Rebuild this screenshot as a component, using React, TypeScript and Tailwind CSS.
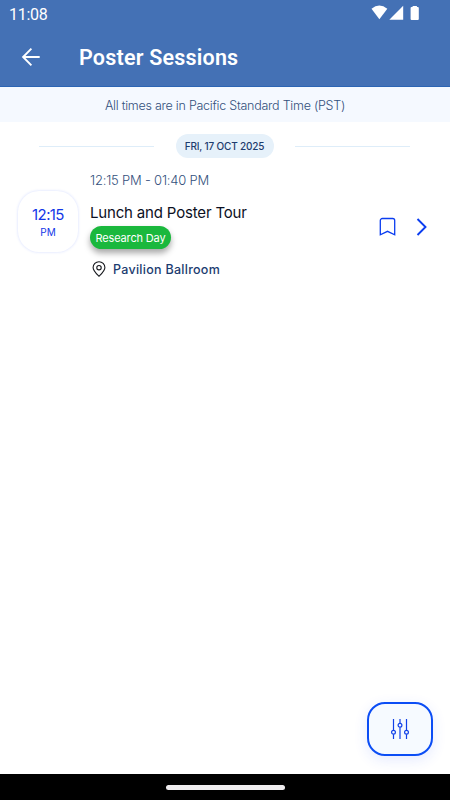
import type { ReactNode } from "react";

type Session = {
  time: string;
  period: string;
  range: string;
  title: string;
  tag: string;
  location: string;
};

const sessions: Session[] = [
  {
    time: "12:15",
    period: "PM",
    range: "12:15 PM - 01:40 PM",
    title: "Lunch and Poster Tour",
    tag: "Research Day",
    location: "Pavilion Ballroom",
  },
];

function StatusBar() {
  return (
    <div className="flex h-7 items-start justify-between pl-[9px] pr-[30px] font-['Roboto',sans-serif] text-white">
      <span className="pt-[5px] text-[16px] leading-[19px] tracking-[-0.25px]">
        11:08
      </span>
      <svg className="mt-[5px]" width="50" height="16" viewBox="0 0 50 16" fill="currentColor">
        <path d="M1.500 3.800Q9.400-2.600 17.300 3.800L9.400 14.200z" />
        <path d="M33.2.8v13.900H19.300z" />
        <path d="M42.6 1h4.300v1h.9a1 1 0 0 1 1 1v11a1 1 0 0 1-1 1h-6.200a1 1 0 0 1-1-1V3a1 1 0 0 1 1-1h1z" />
      </svg>
    </div>
  );
}

function Header({ title }: { title: string }) {
  return (
    <header className="h-[87px] bg-[#4471b5] shadow-[inset_0_-1px_0_#2c65b4]">
      <StatusBar />
      <div className="flex items-center pl-[21px] pt-[17px] text-white">
        <button aria-label="Back" className="-mt-[2px]">
          <svg width="20" height="20" viewBox="0 0 20 20" fill="none" stroke="currentColor" strokeWidth="1.900">
            <path d="M18.700 10H2.200M10.400 1.700L2.100 10l8.300 8.300" />
          </svg>
        </button>
        <h1 className="pl-[38px] font-['Roboto',sans-serif] text-[21.500px] leading-[25px] font-semibold tracking-[0.2px]">
          {title}
        </h1>
      </div>
    </header>
  );
}

function DayDivider({ children }: { children: ReactNode }) {
  return (
    <div className="flex h-6 items-center justify-between pl-[39px] pr-[40px]">
      <span className="h-px w-[115px] bg-[#deedf9]" />
      <span className="flex h-6 w-[98px] items-center justify-center rounded-full bg-[#e6f1fa] text-[10px] font-medium tracking-[-0.17px] whitespace-nowrap text-[#1d3c6e]">
        {children}
      </span>
      <span className="h-px w-[115px] bg-[#deedf9]" />
    </div>
  );
}

function SessionRow({ session }: { session: Session }) {
  return (
    <div className="flex items-start pl-[18px] pr-[21px] pt-[14px]">
      <div className="mt-[19px] flex h-[61px] w-[60px] flex-col items-center rounded-[21px] bg-white pt-[14px] text-[#1337e8] shadow-[0_0_3px_rgba(40,80,255,0.2)]">
        <span className="text-[15px] leading-[20px] tracking-[-0.6px]">{session.time}</span>
        <span className="mt-[1px] text-[10px] leading-[12px]">{session.period}</span>
      </div>

      <div className="flex flex-1 flex-col items-start pl-[12px]">
        <p className="text-[13px] leading-[17px] font-light tracking-[-0.2px] text-[#33507c]">
          {session.range}
        </p>
        <h2 className="mt-[14px] text-[15px] leading-[20px] tracking-[-0.17px] text-[#0b1023]">
          {session.title}
        </h2>
        <span className="mt-[3px] flex h-[23px] w-[81px] items-center justify-center rounded-full bg-[#1ab83d] pt-px text-[11px] tracking-[-0.15px] whitespace-nowrap text-white shadow-[0_4px_6px_rgba(0,0,0,0.35)]">
          {session.tag}
        </span>
        <div className="mt-[12px] flex items-center pl-[2px]">
          <svg width="14" height="17" viewBox="0 0 14 17" fill="none" stroke="#15171c" strokeWidth="1.100">
            <path d="M7 15.300C4.600 13 1.100 10 1.100 6.600a5.900 5.900 0 0 1 11.800 0C12.900 10 9.400 13 7 15.300z" />
            <circle cx="7" cy="6.700" r="2.200" />
          </svg>
          <span className="pl-[7px] text-[12.500px] leading-[17px] font-medium tracking-[0.28px] text-[#1c3c70]">
            {session.location}
          </span>
        </div>
      </div>

      <div className="mt-[45px] flex items-center gap-[19px] text-[#0b3df0]">
        <svg width="18" height="20" viewBox="0 0 18 20" fill="none" stroke="currentColor" strokeWidth="1.300">
          <path d="M3.300 1.500h10.400a2 2 0 0 1 2 2v14.300L8.500 14.300 1.300 17.800V3.500a2 2 0 0 1 2-2z" />
        </svg>
        <svg width="13" height="20" viewBox="0 0 13 20" fill="none" stroke="currentColor" strokeWidth="1.900">
          <path d="M1.500 2l8 8-8 8" />
        </svg>
      </div>
    </div>
  );
}

function FilterButton() {
  return (
    <button
      aria-label="Filter"
      className="flex h-[54px] w-[66px] items-center justify-center rounded-[18px] border-2 border-[#0b4df5] bg-[#f6faff] shadow-[0_4px_14px_rgba(40,80,255,0.12)]"
    >
      <svg width="20" height="22" viewBox="0 0 20 22" fill="none" stroke="#1040e8" strokeWidth="1.200">
        <path d="M3.500 1v11.200M3.500 16.200V21M10 1v4.200M10 9.200V21M16.500 1v11.200M16.500 16.200V21" />
        <circle cx="3.500" cy="14.200" r="1.900" />
        <circle cx="10" cy="7.200" r="1.900" />
        <circle cx="16.500" cy="14.200" r="1.900" />
      </svg>
    </button>
  );
}

export default function App() {
  return (
    <div className="flex h-[800px] w-[450px] flex-col overflow-hidden bg-white font-['Inter','Liberation_Sans',sans-serif]">
      <Header title="Poster Sessions" />
      <p className="flex h-[35px] items-center justify-center bg-[#f5f9ff] pt-[3px] text-[12.500px] font-light tracking-[-0.25px] text-[#33507c]">
        All times are in Pacific Standard Time (PST)
      </p>

      <main className="flex flex-1 flex-col pt-[12px]">
        <DayDivider>FRI, 17 OCT 2025</DayDivider>
        {sessions.map((session) => (
          <SessionRow key={session.title} session={session} />
        ))}
        <div className="mt-auto flex justify-end pr-[17px] pb-[18px]">
          <FilterButton />
        </div>
      </main>

      <div className="flex h-[26px] items-center justify-center bg-black">
        <span className="h-[5px] w-[119px] rounded-full bg-[#eeecee]" />
      </div>
    </div>
  );
}
